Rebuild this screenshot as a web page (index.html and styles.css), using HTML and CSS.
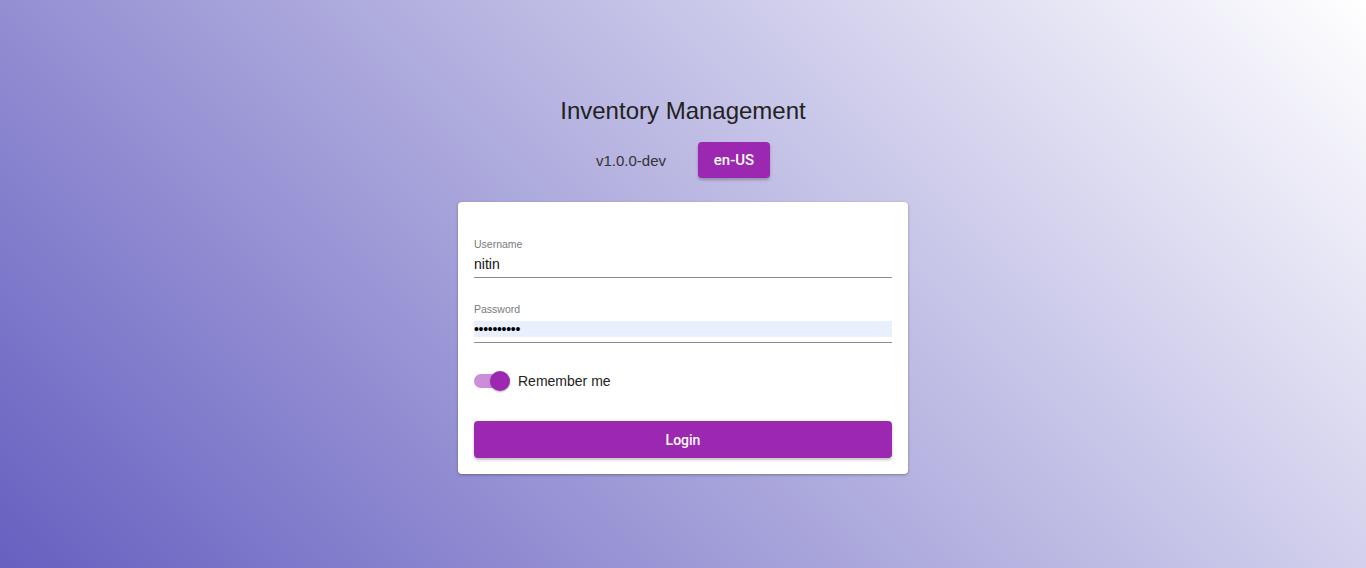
FILE: index.html
```html
<!DOCTYPE html>
<html>
<head>
<meta charset="utf-8">
<link rel="stylesheet" href="styles.css">
</head>
<body>
<div class="page">
  <h1 class="title">Inventory Management</h1>
  <div class="meta">
    <span class="version">v1.0.0-dev</span>
    <button class="lang">en-US</button>
  </div>
  <form class="card">
    <div class="field">
      <label class="label">Username</label>
      <div class="input"><span class="value">nitin</span></div>
    </div>
    <div class="field">
      <label class="label">Password</label>
      <div class="input"><span class="value autofill">••••••••••</span></div>
    </div>
    <div class="remember">
      <span class="switch"><span class="track"></span><span class="thumb"></span></span>
      <span class="remember-text">Remember me</span>
    </div>
    <button type="button" class="login">Login</button>
  </form>
</div>
</body>
</html>
```
FILE: styles.css
```css
html, body {
  margin: 0;
  height: 100%;
}
body {
  font-family: "Liberation Sans", Arial, sans-serif;
  background: linear-gradient(45deg, #6660c0 0%, #ffffff 100%);
  color: #222;
}
.page {
  display: flex;
  flex-direction: column;
  align-items: center;
  padding-top: 97px;
}
.title {
  margin: 0;
  font-size: 24px;
  font-weight: normal;
  line-height: 28px;
  color: #222;
}
.meta {
  display: flex;
  align-items: center;
  gap: 32px;
  margin-top: 17px;
}
.version {
  font-size: 15px;
  color: #333;
}
.lang {
  width: 72px;
  height: 36px;
  border: none;
  border-radius: 4px;
  background: #9c27b0;
  color: #fff;
  font-family: Roboto, "Liberation Sans", sans-serif;
  font-size: 15px;
  font-weight: 500;
  box-shadow: 0 2px 3px rgba(0,0,0,0.25);
}
.card {
  margin-top: 24px;
  width: 450px;
  box-sizing: border-box;
  background: #fff;
  border-radius: 4px;
  box-shadow: 0 1px 3px rgba(0,0,0,0.3);
  padding: 36px 16px 16px;
  display: flex;
  flex-direction: column;
}
.field {
  display: flex;
  flex-direction: column;
  margin-bottom: 25px;
}
.label {
  font-size: 10.5px;
  color: #7a7a7a;
  line-height: 12px;
}
.input {
  border-bottom: 1px solid #8c8c8c;
  padding-top: 6px;
  height: 21px;
}
.value {
  display: block;
  height: 16px;
  line-height: 16px;
  font-size: 14px;
  color: #111;
}
.value.autofill {
  background: #e8f0fe;
  letter-spacing: -0.3px;
  color: #000;
}
.remember {
  display: flex;
  align-items: center;
  gap: 8px;
  margin-top: 2px;
  height: 22px;
}
.switch {
  position: relative;
  width: 36px;
  height: 22px;
  display: inline-block;
}
.track {
  position: absolute;
  left: 0;
  top: 4px;
  width: 30px;
  height: 14px;
  border-radius: 7px;
  background: #cc8ed8;
}
.thumb {
  position: absolute;
  left: 16px;
  top: 1px;
  width: 20px;
  height: 20px;
  border-radius: 50%;
  background: #9c27b0;
  box-shadow: 0 1px 2px rgba(0,0,0,0.3);
}
.remember-text {
  font-size: 14px;
  color: #222;
}
.login {
  margin-top: 29px;
  height: 37px;
  border: none;
  border-radius: 4px;
  background: #9c27b0;
  color: #fff;
  font-family: Roboto, "Liberation Sans", sans-serif;
  font-size: 14px;
  font-weight: 500;
  box-shadow: 0 2px 3px rgba(0,0,0,0.25);
}
```
